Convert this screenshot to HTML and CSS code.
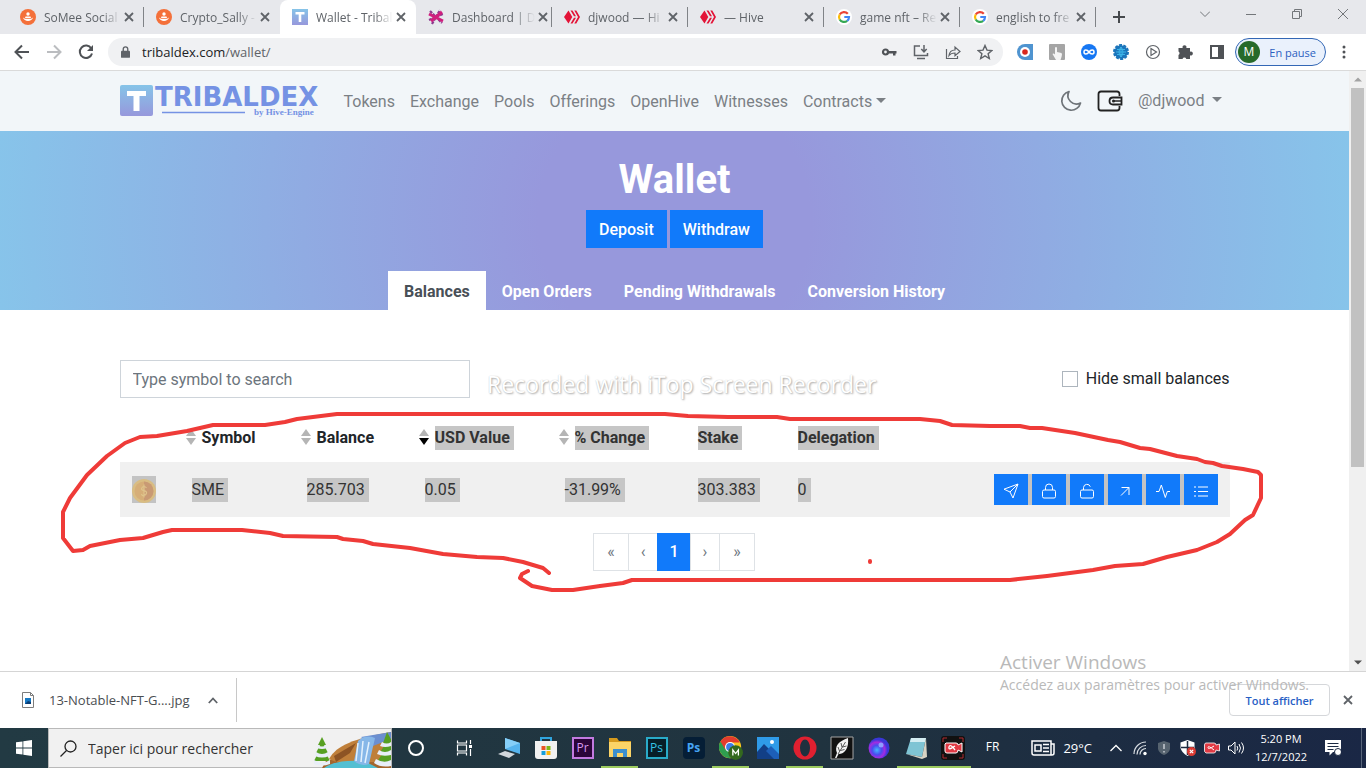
FILE: index.html
```html
<!DOCTYPE html>
<html lang="en">
<head>
  <meta charset="UTF-8" />
  <meta name="viewport" content="width=device-width, initial-scale=1" />
  <title>Wallet - Tribaldex</title>
  <link rel="stylesheet" href="styles.css">
</head>
<body>
  <!-- Shared icon shapes -->
  <svg class="defs" aria-hidden="true">
    <symbol id="close" viewBox="0 0 10 10"><path d="M1 1l8 8M9 1l-8 8" stroke="currentColor" stroke-width="1.8" fill="none"/></symbol>
    <symbol id="somee" viewBox="0 0 16 16"><circle cx="8" cy="8" r="8" fill="#f4703a"/><circle cx="8" cy="5" r="1.7" fill="#fff"/><path d="M5.5 7.5h5L11 9H5z" fill="#fff"/><path d="M3 8.5c1 4.500 9 4.500 10 0l-2 1.200H5z" fill="#fff"/></symbol>
    <symbol id="hive" viewBox="0 0 16 16"><path d="M4.500 1.500L8.300 8l-3.800 6.500L0 8z" fill="#e31337"/><path d="M6.500 1.500h2L12 7.300h-2zM10 8.700h2l-3.500 5.800h-2zM10.300 1.500h2L16 8l-3.700 6.500h-2L14 8z" fill="#e31337"/></symbol>
    <symbol id="google" viewBox="0 0 16 16"><circle cx="8" cy="8" r="8" fill="#fff"/><g fill="none" stroke-width="2.200"><path d="M11.800 4.800A5 5 0 0 0 3.700 5.500" stroke="#ea4335"/><path d="M3.700 5.500a5 5 0 0 0 0 5" stroke="#fbbc05"/><path d="M3.700 10.500a5 5 0 0 0 7.500 1.300" stroke="#34a853"/><path d="M11.200 11.800A5 5 0 0 0 13 8H8.300" stroke="#4285f4"/></g></symbol>
    <symbol id="sort" viewBox="0 0 12 16"><path d="M6 0l5 7H1z" fill="#b5b5b5"/><path class="down" d="M1 9h10l-5 7z"/></symbol>
  </svg>

  <!-- Browser tabs -->
  <div class="tab-strip">
    <div class="tab"><svg class="favicon"><use href="#somee"/></svg><a href="#" class="tab-title">SoMee Social</a><button class="close" aria-label="Close tab"><svg><use href="#close"/></svg></button></div>
    <div class="tab no-line"><svg class="favicon"><use href="#somee"/></svg><a href="#" class="tab-title">Crypto_Sally -</a><button class="close" aria-label="Close tab"><svg><use href="#close"/></svg></button></div>
    <div class="tab active"><svg class="favicon" viewBox="0 0 16 16"><defs><linearGradient id="tribe" x2="0" y2="1"><stop stop-color="#86c4e8"/><stop offset="1" stop-color="#9798dc"/></linearGradient></defs><path d="M0 0h16v16H0z" fill="url(#tribe)"/><path d="M3.500 3h9v2.500H9.300V13H6.700V5.500H3.500z" fill="#fff"/></svg><a href="#" class="tab-title">Wallet - Tribal</a><button class="close" aria-label="Close tab"><svg><use href="#close"/></svg></button></div>
    <div class="tab"><svg class="favicon" viewBox="0 0 16 16"><path d="M2 2l12 12M1 11L15 5M4 15L12 1" stroke="#8d3a8f" stroke-width="2.200" stroke-dasharray="3 1"/><path d="M1 5l14 7M3 12L14 3" stroke="#d01d7c" stroke-width="3"/></svg><a href="#" class="tab-title">Dashboard | D</a><button class="close" aria-label="Close tab"><svg><use href="#close"/></svg></button></div>
    <div class="tab"><svg class="favicon"><use href="#hive"/></svg><a href="#" class="tab-title">djwood — Hi</a><button class="close" aria-label="Close tab"><svg><use href="#close"/></svg></button></div>
    <div class="tab"><svg class="favicon"><use href="#hive"/></svg><a href="#" class="tab-title">— Hive</a><button class="close" aria-label="Close tab"><svg><use href="#close"/></svg></button></div>
    <div class="tab"><svg class="favicon"><use href="#google"/></svg><a href="#" class="tab-title">game nft – Re</a><button class="close" aria-label="Close tab"><svg><use href="#close"/></svg></button></div>
    <div class="tab"><svg class="favicon"><use href="#google"/></svg><a href="#" class="tab-title">english to fre</a><button class="close" aria-label="Close tab"><svg><use href="#close"/></svg></button></div>
    <button class="new-tab" aria-label="New tab"><svg viewBox="0 0 12 12" width="12" height="12"><path d="M6 0v12M0 6h12" stroke="#46494d" stroke-width="2"/></svg></button>
    <div class="window-buttons">
      <button aria-label="Search tabs"><svg viewBox="0 0 10 10"><path d="M0 2.500l5 5 5-5"/></svg></button>
      <button aria-label="Minimize"><svg viewBox="0 0 10 10"><path d="M0 5.500h10"/></svg></button>
      <button aria-label="Restore"><svg viewBox="0 0 10 10"><path d="M.5 2.500h7v7h-7zM2.500 2.500v-2h7v7h-2"/></svg></button>
      <button aria-label="Close"><svg viewBox="0 0 10 10"><path d="M0 0l10 10M10 0L0 10"/></svg></button>
    </div>
  </div>

  <!-- Browser toolbar -->
  <div class="toolbar">
    <button class="tool" aria-label="Back"><svg viewBox="0 0 16 16"><path d="M15 8H2M8 1.500L1.500 8 8 14.500" fill="none" stroke="#4f5256" stroke-width="2"/></svg></button>
    <button class="tool" aria-label="Forward"><svg viewBox="0 0 16 16"><path d="M1 8h13M8 1.500L14.500 8 8 14.500" fill="none" stroke="#bbbdc0" stroke-width="2"/></svg></button>
    <button class="tool" aria-label="Reload"><svg viewBox="0 0 16 16"><path d="M13.300 4.500A6.200 6.200 0 1 0 14 9.500" fill="none" stroke="#4f5256" stroke-width="2"/><path d="M15 1v6H9z" fill="#4f5256"/></svg></button>
    <div class="omnibox">
      <svg class="lock" viewBox="0 0 10 13"><path d="M1 5h8q1 0 1 1v6q0 1-1 1H1q-1 0-1-1V6q0-1 1-1z" fill="#5f6368"/><path d="M2.500 5.500V3.300a2.500 2.500 0 0 1 5 0v2.200" fill="none" stroke="#5f6368" stroke-width="1.500"/></svg>
      <a href="#" class="url">tribaldex.com<span>/wallet/</span></a>
      <button class="tool" aria-label="Passwords"><svg viewBox="0 0 16 16"><circle cx="4.500" cy="8" r="2.500" fill="none" stroke="#4f5256" stroke-width="2.200"/><path d="M7 7h8.500v2.500H14.500V11.500H12V9.500H7z" fill="#4f5256"/></svg></button>
      <button class="tool" aria-label="Install"><svg viewBox="0 0 16 16"><path d="M7 2H1.500v9.500h13V9M4 14.500h8M11 1v6.500M8.300 5l2.700 2.800L13.700 5" fill="none" stroke="#5f6368" stroke-width="1.500"/></svg></button>
      <button class="tool" aria-label="Share"><svg viewBox="0 0 16 16"><path d="M1.500 5v9.500h11V12M4 11.500C4.500 7.500 7 6 10 6V3l5 4.500-5 4.200V9C7.500 9 5.500 9.500 4 11.500z" fill="none" stroke="#5f6368" stroke-width="1.200"/></svg></button>
      <button class="tool" aria-label="Bookmark"><svg viewBox="0 0 16 16"><path d="M8 1.500l2 4.600 4.800.4-3.700 3.200 1.200 4.800L8 11.900l-4.300 2.600 1.200-4.800L1.200 6.500 6 6.100z" fill="none" stroke="#5f6368" stroke-width="1.400"/></svg></button>
    </div>
    <button class="tool" aria-label="Ad recorder"><svg viewBox="0 0 16 16"><path d="M8 0h8v16H8A8 8 0 0 1 8 0z" fill="#4f94d0"/><circle cx="8" cy="8" r="5" fill="#fff"/><circle cx="8" cy="8" r="2.800" fill="#d8271c"/></svg></button>
    <button class="tool" aria-label="Clicker"><svg viewBox="0 0 16 16"><rect width="16" height="16" rx="1" fill="#a5a5a5"/><path d="M6 3.500q1-1 2 0V8l4.500 1q1 1 0 4l-1 3H7L3.500 10q1-1 2.500.5z" fill="#f4f4f4"/></svg></button>
    <button class="tool" aria-label="Infinity"><svg viewBox="0 0 16 16"><circle cx="8" cy="8" r="8" fill="#1677f3"/><path d="M8 8c-2-3-5-2.600-5 0s3 3 5 0 5-2.600 5 0-3 3-5 0z" fill="none" stroke="#fff" stroke-width="1.500"/></svg></button>
    <button class="tool" aria-label="Globe"><svg viewBox="0 0 16 16"><circle cx="8" cy="8" r="6.700" fill="#1b75bb"/><circle cx="8" cy="8" r="7" fill="none" stroke="#1b75bb" stroke-width="2" stroke-dasharray="3 1.400"/><path d="M3 8h10M8 3v10M4 5.500h8M4 10.500h8M8 3q-4 5 0 10q4-5 0-10" fill="none" stroke="#3cb4e8"/></svg></button>
    <button class="tool" aria-label="Player"><svg viewBox="0 0 16 16"><circle cx="8" cy="8" r="6.500" fill="none" stroke="#5f6368" stroke-width="1.200"/><path d="M6 4.500L11.500 8 6 11.500z" fill="none" stroke="#5f6368" stroke-width="1.200"/></svg></button>
    <button class="tool" aria-label="Extensions"><svg viewBox="0 0 16 16"><path d="M1.500 4h4.200a2 2 0 1 1 3.600 0H13v3.700a2 2 0 1 1 0 3.600V15H9.300a2 2 0 0 0-3.800 0h-4v-4a2 2 0 0 0 0-3.500z" fill="#4f5256"/></svg></button>
    <button class="tool" aria-label="Side panel"><svg viewBox="0 0 16 16"><path d="M1 1h14v14H1zM3 3v10h6V3z" fill="#4f5256" fill-rule="evenodd"/></svg></button>
    <button class="profile"><span class="avatar">M</span>En pause</button>
    <button class="tool menu-dots" aria-label="Menu"><svg viewBox="0 0 16 16"><g fill="#4f5256"><circle cx="8" cy="3" r="1.500"/><circle cx="8" cy="8" r="1.500"/><circle cx="8" cy="13" r="1.500"/></g></svg></button>
  </div>

  <!-- Web page -->
  <div class="viewport">
    <div class="page">
      <header>
        <div class="container">
          <a href="#" class="logo" aria-label="Tribaldex">
            <svg viewBox="0 0 198 34" width="198" height="34">
              <rect x="0" y="1" width="33" height="31" rx="2" fill="url(#tribe)"/>
              <path d="M7 7h19v5h-6.500v15h-6V12H7z" fill="#fff"/>
              <text x="35" y="22" class="logo-name">TRIBALDEX</text>
              <path d="M42 28.500h83" stroke="#7592e4" stroke-width="1.500"/>
              <text x="134" y="31" class="logo-sub">by Hive-Engine</text>
            </svg>
          </a>
          <nav>
            <ul class="menu">
              <li><a href="#">Tokens</a></li>
              <li><a href="#">Exchange</a></li>
              <li><a href="#">Pools</a></li>
              <li><a href="#">Offerings</a></li>
              <li><a href="#">OpenHive</a></li>
              <li><a href="#">Witnesses</a></li>
              <li><a href="#" class="caret">Contracts</a></li>
            </ul>
          </nav>
          <div class="user-menu">
            <button aria-label="Dark mode"><svg viewBox="0 0 22 22" width="22" height="22"><path d="M9 1.500A9.500 9.500 0 1 0 20.500 13 8.500 8.500 0 0 1 9 1.500z" fill="none" stroke="#6f7479" stroke-width="1.700" stroke-linejoin="round"/></svg></button>
            <button aria-label="Wallet"><svg viewBox="0 0 26 22" width="26" height="22"><path d="M22.500 6V4q0-2.500-2.500-2.500H4Q1.500 1.500 1.500 4v14q0 2.500 2.500 2.500h16q2.500 0 2.500-2.500v-2" fill="none" stroke="#222" stroke-width="1.800"/><path d="M24.500 7.500H16q-3.500 0-3.500 3.500t3.500 3.500h8.500z" fill="none" stroke="#222" stroke-width="1.800"/><path d="M24 11h-7" stroke="#222" stroke-width="1.500"/><circle cx="16.500" cy="11" r="1.500" fill="#222"/></svg></button>
            <a href="#" class="caret">@djwood</a>
          </div>
        </div>
      </header>

      <section class="hero">
        <h1>Wallet</h1>
        <div class="hero-buttons">
          <button>Deposit</button>
          <button>Withdraw</button>
        </div>
        <ul class="tabs">
          <li><a href="#" class="active">Balances</a></li>
          <li><a href="#">Open Orders</a></li>
          <li><a href="#">Pending Withdrawals</a></li>
          <li><a href="#">Conversion History</a></li>
        </ul>
      </section>

      <main class="container">
        <div class="filters">
          <input type="text" class="search" placeholder="Type symbol to search" aria-label="Type symbol to search">
          <div class="check">
            <input type="checkbox" id="hideSmall">
            <label for="hideSmall">Hide small balances</label>
          </div>
        </div>

        <table>
          <colgroup>
            <col class="c-icon"><col class="c-symbol"><col class="c-balance"><col class="c-usd"><col class="c-change"><col class="c-stake"><col>
            <col class="c-actions">
          </colgroup>
          <thead>
            <tr>
              <th></th>
              <th class="sortable"><svg><use href="#sort"/></svg>Symbol</th>
              <th class="sortable"><svg><use href="#sort"/></svg>Balance</th>
              <th class="sortable sorted"><svg><use href="#sort"/></svg><span class="sel">USD Value</span></th>
              <th class="sortable"><svg><use href="#sort"/></svg><span class="sel">% Change</span></th>
              <th><span class="sel">Stake</span></th>
              <th><span class="sel">Delegation</span></th>
              <th></th>
            </tr>
          </thead>
          <tbody>
            <tr>
              <td><svg class="coin" viewBox="0 0 24 27"><circle cx="12" cy="15" r="12" fill="#d9bd83"/><circle cx="12" cy="15" r="9.500" fill="#d6ae78"/><path d="M12 5.500a9.500 9.500 0 0 1 0 19z" fill="#c99a74"/><path d="M14.500 12q-1-1.500-2.500-1.500t-2.300 1.700 2.300 2.500 2.500 2.500-2.500 2.300-2.500-1.500M12 8.500v13" fill="none" stroke="#dfc48c" stroke-width="1.200"/></svg></td>
              <td><span class="sel">SME</span></td>
              <td><span class="sel">285.703</span></td>
              <td><span class="sel">0.05</span></td>
              <td><span class="sel">-31.99%</span></td>
              <td><span class="sel">303.383</span></td>
              <td><span class="sel">0</span></td>
              <td class="actions">
                <div class="action-group">
                  <button aria-label="Send"><svg viewBox="0 0 16 16"><path d="M15 1L10 15 7 9 1 6.200zM15 1L7 9" stroke-linejoin="round"/></svg></button>
                  <button aria-label="Stake"><svg viewBox="0 0 16 16"><rect x="1.500" y="7" width="13" height="8" rx="1.500"/><path d="M4.500 7V4.500a3.500 3.500 0 0 1 7 0V7"/></svg></button>
                  <button aria-label="Unstake"><svg viewBox="0 0 16 16"><rect x="1.500" y="7" width="13" height="8" rx="1.500"/><path d="M4.500 7V4.500a3.500 3.500 0 0 1 6.800-.8"/></svg></button>
                  <button aria-label="Delegate"><svg viewBox="0 0 16 16"><path d="M4 12.500L12 4.500M4.500 4.500H12V12"/></svg></button>
                  <button aria-label="Activity"><svg viewBox="0 0 16 16"><path d="M1 8.500h3L6.300 2l4 12.500 2-6H15"/></svg></button>
                  <button aria-label="History"><svg viewBox="0 0 16 16"><path d="M5 4h10M5 8.500h10M5 13h10M1 4h2M1 8.500h2M1 13h2"/></svg></button>
                </div>
              </td>
            </tr>
          </tbody>
        </table>

        <ul class="pagination">
          <li><button class="edge">«</button></li>
          <li><button>‹</button></li>
          <li><button class="active">1</button></li>
          <li><button>›</button></li>
          <li><button class="edge">»</button></li>
        </ul>
      </main>
    </div>
    <div class="scrollbar">
      <svg viewBox="0 0 17 17"><path d="M5 10.500h8L9 6.500z" fill="#a3a3a3"/></svg>
      <div class="track"><div class="thumb"></div></div>
      <svg viewBox="0 0 17 17"><path d="M5 6.500h8l-4 4z" fill="#505050"/></svg>
    </div>
  </div>

  <!-- Downloads bar -->
  <div class="downloads">
    <button class="download-item">
      <svg viewBox="0 0 12 16" width="12" height="16"><path d="M.5.500h8l3 3v12H.500z" fill="#fff" stroke="#7d7d7d"/><path d="M8.500.500v3h3" fill="none" stroke="#7d7d7d"/><path d="M3 6h6v6H3z" fill="#1679c4"/><path d="M3 12l3-3 3 1v2z" fill="#0a3d75"/></svg>
      <span>13-Notable-NFT-G....jpg</span>
      <svg viewBox="0 0 10 7" width="10" height="7"><path d="M.8 6L5 1.500 9.200 6" fill="none" stroke="#5f6368" stroke-width="1.800"/></svg>
    </button>
    <button class="show-all">Tout afficher</button>
    <button class="close" aria-label="Close downloads"><svg><use href="#close"/></svg></button>
  </div>

  <!-- Windows taskbar -->
  <div class="taskbar">
    <button class="start" aria-label="Start"><svg viewBox="0 0 16 16" width="16" height="16"><path d="M0 2.300L6.500 1.400V7.600H0zM7.300 1.300L16 0v7.600H7.300zM0 8.400h6.500v6.200L0 13.700zM7.300 8.400H16V16l-8.700-1.300z" fill="#fff"/></svg></button>
    <div class="search-box">
      <svg viewBox="0 0 17 17" width="17" height="17"><circle cx="10.500" cy="6.500" r="5.500" fill="none" stroke="#222" stroke-width="1.300"/><path d="M6.500 10.500L.5 16.500" stroke="#222" stroke-width="1.300"/></svg>
      <input type="text" placeholder="Taper ici pour rechercher" aria-label="Taper ici pour rechercher">
      <svg viewBox="0 0 77 39" width="77" height="39">
        <path d="M8 39l4-7 28-8 37 4v11z" fill="#a4652d"/>
        <path d="M15 30c8-14 24-20 62-27v30H22z" fill="#bf7f3a"/>
        <path d="M20 27l22-13-6 10-14 9z" fill="#8d5424"/>
        <path d="M10 39q12-9 40-7l14 7z" fill="#53bfd2"/>
        <path d="M47 8l30-5v7l-18 7z" fill="#6b8fd0"/>
        <path d="M44 12q7-7 17-3l-6 26q-8 3-15-3z" fill="#86b7e8"/>
        <path d="M44 14l-2 18M49 12l-2 21M55 13l-4 21" stroke="#e3f1fd" stroke-width="1.500"/>
        <path d="M8 8l4 8h-2l4 8h-2l4 8H0l4-8H2l4-8H4z" fill="#57a023"/>
        <path d="M4 16q4 3 8 0l1 3q-5 2-10 0zM2 23q6 4 12 0l1 4q-7 3-14 0zM0 31q8 5 16 0v4q-8 3-16 0z" fill="#e8eef8"/>
        <path d="M73 3l6 11-2 19H63l5-8h-3l5-8h-2z" fill="#57a023"/>
        <path d="M68 13q5 3 9 0v4q-6 2-11 0zM65 21q6 4 12 0v5q-8 2-14-1zM62 30q8 5 15 1v6q-10 2-17-3z" fill="#e8eef8"/>
      </svg>
    </div>
    <button class="wide" aria-label="Cortana"><svg viewBox="0 0 18 18" width="18" height="18"><circle cx="9" cy="9" r="7" fill="none" stroke="#fff" stroke-width="2"/></svg></button>
    <button class="wide" aria-label="Task view"><svg viewBox="0 0 16 16" width="16" height="16"><path d="M1.500.5v2.500h9V.5M1.500 15.500V13h9v2.500M1.500 5h9v6h-9zM14.500 0v4M14.500 9v7" fill="none" stroke="#fff" stroke-width="1.200"/><path d="M13 5h3v3h-3z" fill="#fff"/></svg></button>
    <div class="apps">
      <button aria-label="This PC"><svg viewBox="0 0 24 24"><path d="M8 2l15 5v11L8 13z" fill="#56b4ee"/><path d="M8 2l15 5-15 6z" fill="#86cff8"/><path d="M1 18l7-3 10 3-6 4z" fill="#d2d7dc"/></svg></button>
      <button aria-label="Store"><svg viewBox="0 0 24 24"><path d="M7 6V2h10v4" fill="none" stroke="#30a5df" stroke-width="2"/><path d="M1 5h22v15q0 3-3 3H4q-3 0-3-3z" fill="#f1f1f1"/><path d="M7.500 10h4v4h-4z" fill="#e85324"/><path d="M12.500 10h4v4h-4z" fill="#7db715"/><path d="M7.500 15h4v4h-4z" fill="#159ed9"/><path d="M12.500 15h4v4h-4z" fill="#f8b409"/></svg></button>
      <button aria-label="Premiere"><span class="adobe pr">Pr</span></button>
      <button class="open" aria-label="Explorer"><svg viewBox="0 0 24 24"><path d="M1 2h8l2 3h12v16H1z" fill="#d69a1d"/><path d="M1 6h22v15H1z" fill="#fbd467"/><path d="M5 21v-8h14v8h-4v-4H9v4z" fill="#3c8fcd"/></svg></button>
      <button aria-label="Photoshop"><span class="adobe ps">Ps</span></button>
      <button aria-label="Photoshop 2022"><span class="adobe ps-new">Ps</span></button>
      <button class="open" aria-label="Chrome"><svg viewBox="0 0 26 26"><circle cx="12" cy="12" r="12" fill="#f9c51f"/><path d="M1.600 6A12 12 0 0 0 12 24l5-9-5-3z" fill="#2f9e4f"/><path d="M1.600 6L7 15l5-8h10.500A12 12 0 0 0 1.600 6z" fill="#e33b2e"/><circle cx="12" cy="12" r="5.500" fill="#fff"/><circle cx="12" cy="12" r="4.300" fill="#3d7de8"/><circle cx="18" cy="18" r="8" fill="#33691e"/><path d="M15 21v-6l3 4 3-4v6" fill="none" stroke="#fff" stroke-width="1.400"/></svg></button>
      <button aria-label="Photos"><svg viewBox="0 0 24 24"><path d="M1 1h22v22H1z" fill="#2f9be8"/><path d="M1 16l7-8 15 15H1z" fill="#123f86"/><path d="M10 15l5-5 8 8v5h-5z" fill="#1d5fb8"/><circle cx="16" cy="6" r="2" fill="#fff"/></svg></button>
      <button class="open" aria-label="Opera"><svg viewBox="0 0 24 24"><circle cx="12" cy="12" r="11.500" fill="#e02030"/><ellipse cx="12" cy="12" rx="5" ry="8.500" fill="#1f303e"/></svg></button>
      <button aria-label="Feather"><svg viewBox="0 0 24 24"><path d="M1 1h22v22H1z" fill="#111" stroke="#a5a5a5"/><path d="M18 2C9 5 4 10 7 17l-2 5h1.500l2-4C15 18 19 12 18 2z" fill="#f2f2f2"/><path d="M15.500 6L8 18M12.500 11l4-1M10.500 14.500l4-1M12 11l-1-4M9.500 15L8 11" fill="none" stroke="#333" stroke-width=".8"/></svg></button>
      <button aria-label="Orb"><svg viewBox="0 0 24 24"><defs><radialGradient id="orb" cx=".4" cy=".6"><stop stop-color="#45b5ff"/><stop offset=".45" stop-color="#4a4bef"/><stop offset=".75" stop-color="#a32be0"/><stop offset="1" stop-color="#3a36d8"/></radialGradient></defs><circle cx="12" cy="12" r="10.500" fill="url(#orb)"/><circle cx="14" cy="9" r="2.500" fill="#8f9cff"/></svg></button>
      <button class="open" aria-label="Notepad"><svg viewBox="0 0 24 24"><path d="M7 2h15l-4 19-16-3z" fill="#7fc4d4"/><path d="M7 2h15l-1 4L6 6z" fill="#d4edf2"/><path d="M22 2l1 19-5 2-16-5 16 3z" fill="#d8d3c4"/></svg></button>
      <button class="open" aria-label="Recorder"><svg viewBox="0 0 24 24"><rect width="24" height="24" rx="3" fill="#111"/><path d="M2 6V2h4M18 2h4v4M2 18v4h4M18 22h4v-4" fill="none" stroke="#b02a30"/><path d="M5 7h10q2 0 2 2l4-2v9l-4-2q0 3-2 3H6q-2 0-2-2V8z" fill="#e03a44" stroke="#fff"/><path d="M14 10q-7 5-6 1t6 3" fill="none" stroke="#fff" stroke-width="1.300"/></svg></button>
    </div>
    <div class="tray">
      <span class="lang">FR</span>
      <button class="weather"><svg viewBox="0 0 24 16" width="24" height="16"><path d="M1 1h19v14H3q-2 0-2-2zM20 4h3v9q0 2-2 2h-2" fill="none" stroke="#fff" stroke-width="1.500"/><path d="M4 5h6v6H4z" fill="none" stroke="#fff" stroke-width="1.500"/><path d="M12 4.500h6M12 8h6M12 11.500h6" stroke="#fff" stroke-width="1.500"/></svg>29°C</button>
      <button aria-label="Hidden icons"><svg viewBox="0 0 16 16"><path d="M2.500 11L8 5.500l5.500 5.500" fill="none" stroke="#fff" stroke-width="1.300"/></svg></button>
      <button aria-label="Network"><svg viewBox="0 0 16 16"><g fill="none" stroke="#d8dde2" stroke-width="1.200"><path d="M2 14A12 12 0 0 1 14 2M5 14.500A9 9 0 0 1 14 5.500M8 14.500a6 6 0 0 1 6-6"/></g><circle cx="13" cy="13.500" r="1.700" fill="#fff"/></svg></button>
      <button aria-label="Shield"><svg viewBox="0 0 16 16"><path d="M8 1l6 2v6q-1 4-6 6-5-2-6-6V3z" fill="#56636f"/><path d="M8 4v5M8 11v1.500" stroke="#c6ccd2" stroke-width="1.500"/></svg></button>
      <button aria-label="Defender"><svg viewBox="0 0 16 16"><path d="M7.500 0l7 2.500V8q-1 4.500-7 8-6-3.500-7-8V2.500z" fill="#fff"/><path d="M7.500 1v14M1 7.500h13" stroke="#1e2b40" stroke-width="1.500"/><circle cx="11.500" cy="11.500" r="4.500" fill="#dc3b33"/><path d="M9.800 9.800l3.400 3.400M13.200 9.800l-3.400 3.400" stroke="#fff" stroke-width="1.200"/></svg></button>
      <button aria-label="Camera"><svg viewBox="0 0 16 16"><path d="M2 3h8q2 0 2 2l3.500-1v7L12 10q0 3-2 3H2q-2-1-1.500-3V5q0-2 1.500-2z" fill="#e03a44" stroke="#fff" stroke-width=".8"/><path d="M10 6q-6 4-6 1.500T10 10" fill="none" stroke="#fff"/></svg></button>
      <button aria-label="Volume"><svg viewBox="0 0 16 16"><path d="M.5 6H3l4-4v12l-4-4H.5zM9 6q1.500 2 0 4.500M11 4q3 4 0 8.500M13.500 2.500q4 5.500 0 11" fill="none" stroke="#fff"/></svg></button>
      <div class="clock"><span>5:20 PM</span><span>12/7/2022</span></div>
      <button class="notify" aria-label="Notifications"><svg viewBox="0 0 16 16"><path d="M0 0h16v12H8l-3.500 3.500V12H0z" fill="#fff"/><path d="M2.500 3.500h11M2.500 6.500h11M2.500 9.500h6" stroke="#1c2a43"/><circle cx="13" cy="12" r="3.500" fill="#fff" stroke="#1c2a43"/></svg></button>
    </div>
  </div>

  <!-- Overlays -->
  <div class="recorder-mark">Recorded with iTop Screen Recorder</div>
  <div class="activate">
    <strong>Activer Windows</strong>
    <span>Accédez aux paramètres pour activer Windows.</span>
  </div>
  <svg class="drawing" viewBox="0 0 1366 768" aria-hidden="true">
    <path d="M549 573L543 568 523 562 503 558 477 557 443 554 410 548 373 544 363 541 343 539 337 537 283 536 270 533 242 530H172L163 532 143 538 120 540 90 546 83 550 73 551 63 538V512L70 498 87 475 107 456 125 443 140 437 157 436 187 431 213 425H265L285 422 297 419 337 414H665L688 416 728 417H777L790 419H920L940 421 952 425 990 426H1020L1030 428H1042L1075 433 1108 440 1120 442 1140 448 1150 449 1177 456 1197 459 1205 462 1213 463 1222 466 1243 469 1258 472 1261 475V498L1253 515 1245 520 1230 534 1217 542 1197 550 1167 557 1143 564 1115 566 1093 570 1047 576 1010 580H632L623 583 600 586 573 590H552L532 586 520 578 522 574 528 571"/>
    <path d="M870 561v1"/>
  </svg>
</body>
</html>
```
FILE: styles.css
```css
:root {
  --blue: #117afa;
  --text: #212529;
  --muted: #7b8085;
  --chrome-text: #5f6368;
  --site-font: Roboto, sans-serif;
  --ui-font: "Open Sans", "Noto Sans", sans-serif;
}

/* Global Styles & Reset */
* {
  margin: 0;
  padding: 0;
  box-sizing: border-box;
}
body {
  display: flex;
  flex-direction: column;
  height: 100vh;
  position: relative;
  overflow: hidden;
  font-family: var(--ui-font);
  font-size: 12px;
  color: var(--text);
  background-color: #fff;
}
a {
  text-decoration: none;
  color: inherit;
}
ul {
  list-style: none;
}
button {
  display: flex;
  align-items: center;
  justify-content: center;
  border: none;
  background: none;
  font: inherit;
  color: inherit;
  cursor: pointer;
}
.defs {
  position: absolute;
  width: 0;
  height: 0;
}

/* Tab strip */
.tab-strip {
  display: flex;
  flex: none;
  height: 34px;
  padding-left: 8px;
  background-color: #e7e8ec;
}
.tab {
  display: flex;
  align-items: center;
  flex: 0 1 136px;
  min-width: 0;
  padding: 0 7px 0 12px;
  color: var(--chrome-text);
  background: linear-gradient(#808387, #808387) right center / 1px 20px no-repeat;
}
.tab.no-line {
  background: none;
}
.tab.active {
  background: #fff;
  border-radius: 8px 8px 0 0;
}
.favicon {
  flex: none;
  width: 16px;
  height: 16px;
  margin-right: 8px;
}
.tab-title {
  flex: 1;
  white-space: nowrap;
  -webkit-mask-image: linear-gradient(to right, #000 75%, transparent);
  mask-image: linear-gradient(to right, #000 75%, transparent);
}
.close {
  flex: none;
  width: 16px;
  height: 16px;
  color: var(--chrome-text);
}
.close svg {
  width: 10px;
  height: 10px;
}
.new-tab {
  width: 28px;
  margin-left: 9px;
}
.window-buttons {
  display: flex;
  height: 28px;
  margin-left: auto;
}
.window-buttons button {
  width: 46px;
}
.window-buttons svg {
  width: 10px;
  height: 10px;
  fill: none;
  stroke: #73767a;
}

/* Toolbar */
.toolbar {
  display: flex;
  align-items: center;
  flex: none;
  height: 37px;
  padding: 0 4px 0 6px;
  border-bottom: 1px solid #dadada;
}
.tool {
  flex: none;
  width: 32px;
  height: 28px;
}
.tool svg {
  width: 16px;
  height: 16px;
}
.omnibox {
  display: flex;
  align-items: center;
  flex: 1;
  height: 28px;
  margin: 0 6px;
  padding: 0 2px 0 13px;
  border-radius: 14px;
  background-color: #f0f1f3;
}
.lock {
  width: 9px;
  height: 12px;
  margin-right: 12px;
}
.url {
  flex: 1;
  font-size: 13px;
  color: #202124;
}
.url span {
  color: var(--chrome-text);
}
.profile {
  flex: none;
  width: 91px;
  height: 28px;
  margin-left: 2px;
  padding: 0 9px 0 2px;
  justify-content: space-between;
  border: 1px solid #3367b5;
  border-radius: 14px;
  background-color: #eaf1fc;
  color: #2c5fc0;
  font-size: 11px;
}
.avatar {
  width: 22px;
  height: 22px;
  border-radius: 50%;
  background-color: #276a2a;
  color: #fff;
  font-size: 12px;
  line-height: 22px;
}
.menu-dots {
  width: 36px;
}

/* Page area */
.viewport {
  display: flex;
  flex: 1;
  min-height: 0;
}
.page {
  flex: 1;
  overflow: hidden;
  font-family: var(--site-font);
  font-size: 16px;
  line-height: 24px;
}
.container {
  width: 100%;
  max-width: 1140px;
  margin: auto;
  padding: 0 15px;
}
.scrollbar {
  display: flex;
  flex-direction: column;
  width: 17px;
  background-color: #f0f0f0;
}
.scrollbar svg {
  width: 17px;
  height: 17px;
}
.track {
  flex: 1;
  padding: 0 2px;
}
.thumb {
  height: 67%;
  background-color: #c1c1c1;
}

/* Site header */
header {
  background-color: #f2f6f9;
}
header .container {
  display: flex;
  align-items: center;
  height: 60px;
  color: var(--muted);
}
.logo {
  display: flex;
  margin-right: 19px;
}
.logo-name {
  font: bold 26px "DejaVu Sans", sans-serif;
  fill: #7592e4;
}
.logo-sub {
  font: bold 9px "Liberation Serif", serif;
  fill: #7592e4;
}
.menu {
  display: flex;
}
.menu a {
  display: block;
  padding: 9px 8px 7px 7px;
}
.caret::after {
  content: "";
  display: inline-block;
  margin-left: 4px;
  vertical-align: 4px;
  border: 5px solid transparent;
  border-top-color: currentColor;
  border-bottom: 0;
}
.user-menu {
  display: flex;
  align-items: center;
  gap: 15px;
  margin-left: auto;
  padding-right: 8px;
}
.user-menu .caret::after {
  margin-left: 7px;
}

/* Hero */
.hero {
  display: flex;
  flex-direction: column;
  align-items: center;
  padding-top: 25px;
  background: radial-gradient(circle, #9798dc 20%, #87c4ea 100%);
  color: #fff;
}
.hero h1 {
  margin-bottom: 6px;
  font-size: 40px;
  font-weight: 700;
  line-height: 48px;
}
.hero-buttons {
  display: flex;
  gap: 3px;
  margin-bottom: 23px;
}
.hero-buttons button {
  height: 38px;
  padding: 1px 13px 0;
  background-color: var(--blue);
  font-weight: 500;
}
.tabs {
  display: flex;
}
.tabs a {
  display: block;
  padding: 9px 16px 6px;
  font-weight: 700;
}
.tabs .active {
  background-color: #fff;
  color: #495057;
}

/* Balances */
.filters {
  display: flex;
  align-items: center;
  justify-content: space-between;
  padding: 50px 0 16px;
}
.search {
  width: 350px;
  height: 38px;
  padding: 0 12px;
  border: 1px solid #ced4da;
  font: inherit;
}
.search::placeholder {
  color: #6c757d;
}
.check {
  display: flex;
  align-items: center;
  gap: 8px;
}
.check input {
  appearance: none;
  width: 16px;
  height: 16px;
  border: 1px solid #adb5bd;
  background-color: #fff;
}
table {
  width: 100%;
  table-layout: fixed;
  border-collapse: collapse;
}
th {
  height: 48px;
  padding: 0 12px;
  text-align: left;
  font-weight: 700;
  white-space: nowrap;
}
th.sortable {
  padding-left: 5px;
}
th svg {
  width: 12px;
  height: 16px;
  margin-right: 5px;
  vertical-align: -2px;
  fill: #b5b5b5;
}
.sorted svg {
  fill: #000;
}
tbody tr {
  background-color: #f0f0f0;
}
td {
  height: 55px;
  padding: 0 12px;
}
.sel {
  display: inline-block;
  padding-right: 4px;
  background-color: #c6c6c6;
  color: #333;
}
.coin {
  display: block;
  width: 24px;
  height: 27px;
  background-color: #c3c3c3;
}
.c-icon { width: 60px; }
.c-symbol { width: 115px; }
.c-balance { width: 118px; }
.c-usd { width: 140px; }
.c-change { width: 133px; }
.c-stake { width: 100px; }
.c-actions { width: 248px; }
.action-group {
  display: flex;
  gap: 4px;
  background-color: #c3c3c3;
}
.action-group button {
  flex: 1;
  height: 31px;
  padding-top: 2px;
  background-color: var(--blue);
}
.action-group svg {
  width: 16px;
  height: 16px;
  fill: none;
  stroke: #fff;
}

/* Pagination */
.pagination {
  display: flex;
  justify-content: center;
  padding-top: 16px;
}
.pagination button {
  height: 38px;
  padding: 0 12px;
  margin-left: -1px;
  border: 1px solid #dee2e6;
  color: #6c757d;
}
.pagination .edge {
  padding: 0 13px;
}
.pagination .active {
  padding: 0 11px;
  border-color: var(--blue);
  background-color: var(--blue);
  color: #fff;
  font-weight: 500;
}

/* Downloads bar */
.downloads {
  display: flex;
  align-items: center;
  flex: none;
  height: 57px;
  padding: 0 10px 0 0;
  border-top: 1px solid #d5d5d5;
}
.download-item {
  gap: 15px;
  width: 237px;
  height: 44px;
  padding: 0 18px 0 22px;
  border-right: 1px solid #c8c8c8;
  font-size: 13px;
  color: #4a4d51;
}
.download-item span {
  flex: 1;
  text-align: left;
  white-space: nowrap;
}
.show-all {
  width: 101px;
  height: 32px;
  margin-left: auto;
  border: 1px solid #d5d7da;
  border-radius: 4px;
  color: #2860c5;
  font-size: 11px;
  font-weight: 600;
}
.downloads .close {
  margin-left: 10px;
}

/* Taskbar */
.taskbar {
  display: flex;
  flex: none;
  height: 40px;
  background: linear-gradient(to right, #223a43, #20333f 60%, #1a2745);
  color: #fff;
}
.start {
  width: 48px;
}
.search-box {
  display: flex;
  align-items: center;
  width: 344px;
  padding-left: 11px;
  border: 1px solid #b9b9b9;
  background-color: #f1f1f1;
}
.search-box input {
  flex: 1;
  min-width: 0;
  margin-left: 11px;
  border: none;
  background: none;
  font: 14px var(--ui-font);
}
.search-box input::placeholder {
  color: #333;
}
.wide {
  width: 48px;
}
.apps {
  display: flex;
  margin-left: 2px;
}
.apps button {
  width: 37px;
  border: solid transparent;
  border-width: 2px 0;
  background-clip: padding-box;
}
.apps .open {
  border-bottom-color: #9ccb5f;
}
.apps svg {
  width: 24px;
  height: 24px;
}
.adobe {
  width: 22px;
  height: 22px;
  border: 2px solid #c27ae0;
  background-color: #2b0539;
  color: #d99af2;
  font-size: 12px;
  line-height: 17px;
}
.adobe.ps {
  border-color: #29abc9;
  background-color: #071e29;
  color: #35c4e6;
}
.adobe.ps-new {
  border-color: #051e36;
  border-radius: 4px;
  background-color: #051e36;
  color: #45a5f5;
  font-weight: 700;
}
.tray {
  display: flex;
  align-items: center;
  margin-left: auto;
  padding-right: 4px;
}
.tray button {
  width: 24px;
  height: 40px;
}
.tray svg {
  width: 16px;
  height: 16px;
}
.lang {
  padding-bottom: 4px;
}
.tray .weather {
  width: auto;
  gap: 8px;
  margin: 0 12px 0 32px;
  font-size: 13px;
}
.tray .weather svg {
  width: 24px;
}
.clock {
  display: flex;
  flex-direction: column;
  align-items: center;
  width: 66px;
  font-size: 11px;
  line-height: 18px;
}
.tray .notify {
  width: 48px;
  padding-right: 9px;
  border-right: 1px solid #58657a;
}

/* Overlays */
.recorder-mark {
  position: absolute;
  top: 368px;
  left: 487px;
  font-size: 23px;
  line-height: 32px;
  color: #fff;
  text-shadow: 1px 1px 2px #aaa, 0 0 1px #ccc;
}
.activate {
  display: flex;
  flex-direction: column;
  position: absolute;
  top: 650px;
  left: 1000px;
  color: #b9b9b9;
  font-size: 14px;
  line-height: 22px;
  pointer-events: none;
}
.activate strong {
  font-size: 19px;
  font-weight: 400;
  line-height: 24px;
}
.drawing {
  position: absolute;
  top: 0;
  left: 0;
  width: 1366px;
  height: 768px;
  fill: none;
  stroke: #ef3b38;
  stroke-width: 4;
  stroke-linecap: round;
  stroke-linejoin: round;
  pointer-events: none;
}
```
